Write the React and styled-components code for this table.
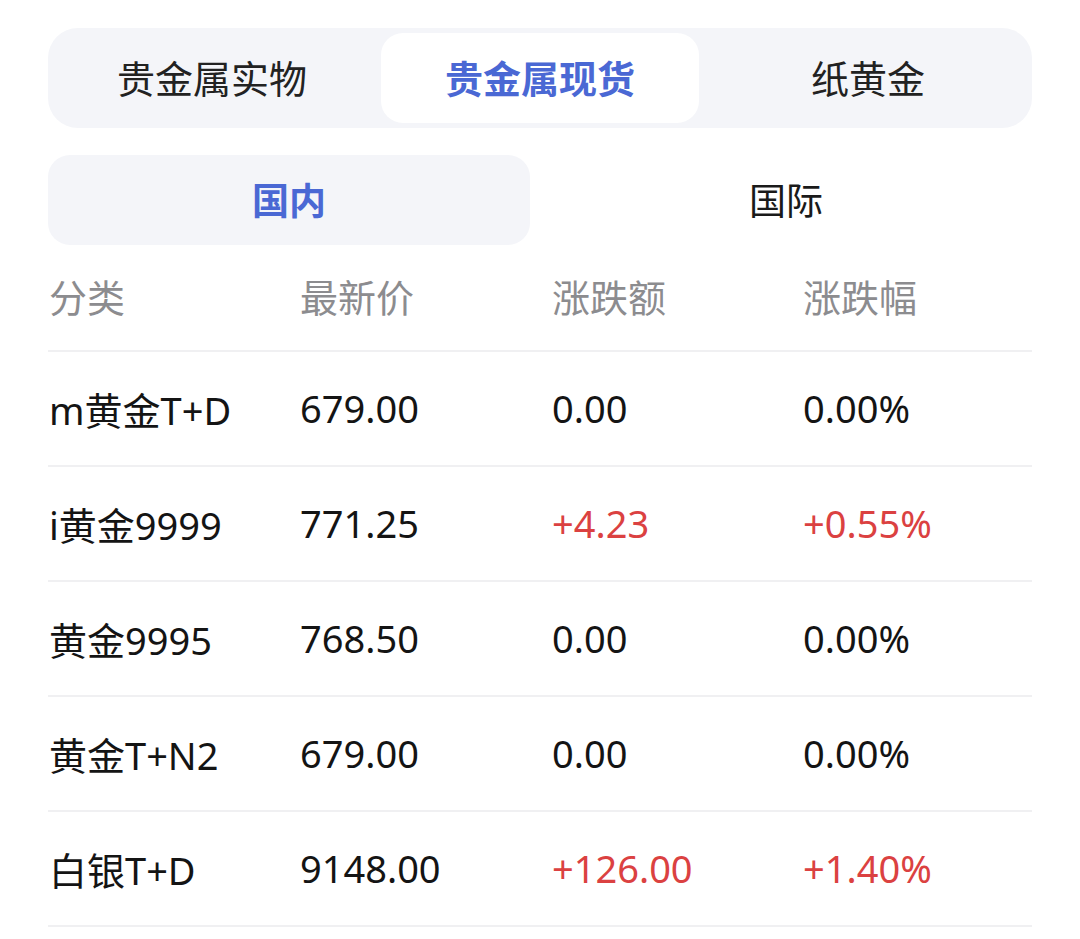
import React from 'react'
import styled, { createGlobalStyle } from 'styled-components'

const GlobalStyle = createGlobalStyle`
  body {
    margin: 0;
    background: #ffffff;
    font-family: "Noto Sans", "Noto Sans CJK SC", sans-serif;
  }
`

const Page = styled.div`
  padding: 28px 48px 0;
`

const TabBar = styled.div`
  display: grid;
  grid-template-columns: repeat(3, 1fr);
  gap: 10px;
  height: 100px;
  padding: 5px;
  box-sizing: border-box;
  background: #f4f5f9;
  border-radius: 30px;
`

const Tab = styled.div`
  display: flex;
  align-items: center;
  justify-content: center;
  padding-bottom: 4px;
  border-radius: 22px;
  font-size: 38px;
  font-weight: ${p => (p.active ? 700 : 400)};
  color: ${p => (p.active ? '#4a68d4' : '#222222')};
  background: ${p => (p.active ? '#ffffff' : 'transparent')};
`

const Segment = styled.div`
  display: grid;
  grid-template-columns: 482px 1fr;
  gap: 10px;
  margin-top: 27px;
  height: 90px;
`

const SegItem = styled.div`
  display: flex;
  align-items: center;
  justify-content: center;
  padding-bottom: 2px;
  border-radius: 22px;
  font-size: 37px;
  font-weight: ${p => (p.active ? 700 : 400)};
  color: ${p => (p.active ? '#4a68d4' : '#1a1a1a')};
  background: ${p => (p.active ? '#f4f5f9' : 'transparent')};
`

const Row = styled.div`
  display: grid;
  grid-template-columns: 251px 252px 251px 1fr;
  align-items: center;
  height: ${p => (p.head ? 107 : 115)}px;
  padding-bottom: ${p => (p.head ? 4 : 1)}px;
  box-sizing: border-box;
  border-bottom: 2px solid #f0f0f2;
`

const Cell = styled.div`
  padding-left: 1px;
  font-size: 38px;
  white-space: nowrap;
  color: ${p => (p.head ? '#8c8c8f' : p.up ? '#db4141' : '#141414')};
`

const rows = [
  { name: 'm黄金T+D', price: '679.00', diff: '0.00', pct: '0.00%' },
  { name: 'i黄金9999', price: '771.25', diff: '+4.23', pct: '+0.55%', up: true },
  { name: '黄金9995', price: '768.50', diff: '0.00', pct: '0.00%' },
  { name: '黄金T+N2', price: '679.00', diff: '0.00', pct: '0.00%' },
  { name: '白银T+D', price: '9148.00', diff: '+126.00', pct: '+1.40%', up: true },
]

export default function App() {
  return (
    <Page>
      <GlobalStyle />
      <TabBar>
        <Tab>贵金属实物</Tab>
        <Tab active>贵金属现货</Tab>
        <Tab>纸黄金</Tab>
      </TabBar>
      <Segment>
        <SegItem active>国内</SegItem>
        <SegItem>国际</SegItem>
      </Segment>
      <Row head>
        <Cell head>分类</Cell>
        <Cell head>最新价</Cell>
        <Cell head>涨跌额</Cell>
        <Cell head>涨跌幅</Cell>
      </Row>
      {rows.map(r => (
        <Row key={r.name}>
          <Cell>{r.name}</Cell>
          <Cell>{r.price}</Cell>
          <Cell up={r.up}>{r.diff}</Cell>
          <Cell up={r.up}>{r.pct}</Cell>
        </Row>
      ))}
    </Page>
  )
}
